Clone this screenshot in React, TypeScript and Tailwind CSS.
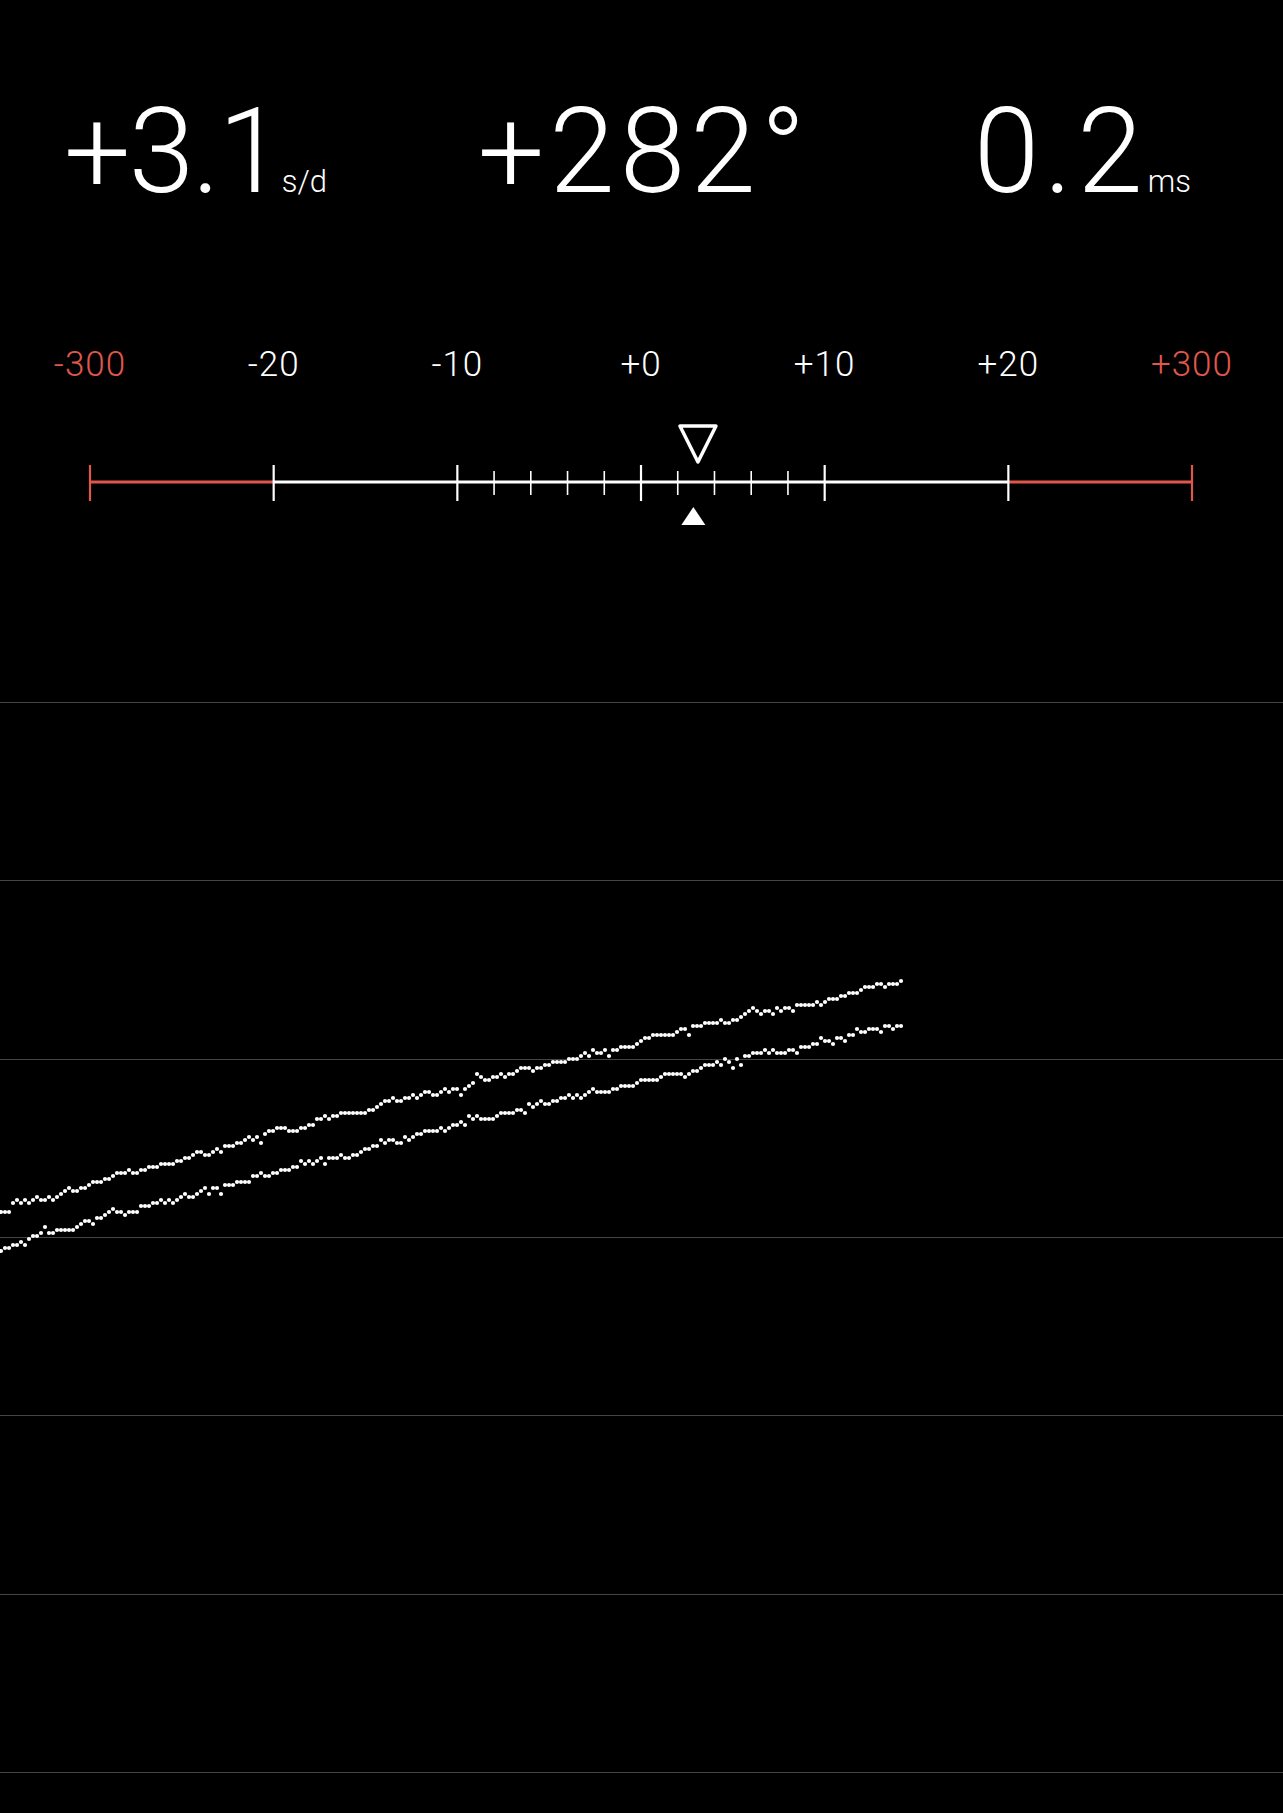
import React from "react";

const RED = "#e0574b";
const FONT = { fontFamily: "Roboto, Inter, 'Liberation Sans', sans-serif" };

// scale from -300 to +300, ticks spaced one segment apart
const X0 = 90;
const SEG = 183.67;
const labels = ["-300", "-20", "-10", "+0", "+10", "+20", "+300"];

// small seeded rng so the trace looks the same each render
function makeRng(seed: number) {
  let s = seed;
  return () => {
    s = (s * 1103515245 + 12345) % 2147483648;
    return s / 2147483648;
  };
}

function buildTrace(a: number, b: number, c: number, seed: number) {
  const rnd = makeRng(seed);
  const pts: { x: number; y: number }[] = [];
  let drift = 0;
  for (let i = 0; i < 226; i++) {
    const x = 1 + i * 4;
    drift = drift * 0.75 + (rnd() - 0.5) * 4.5;
    const jump = rnd() > 0.8 ? (rnd() - 0.5) * 10 : 0;
    const raw = a + b * x + c * x * x + drift + jump;
    pts.push({ x, y: Math.round(raw / 3) * 3 });
  }
  return pts;
}

// y values are relative to the chart top (first grid line)
const upper = buildTrace(1212 - 703, -0.2903, 4.16e-5, 7);
const lower = buildTrace(1250 - 703, -0.2927, 5.04e-5, 31);

function Reading({ value, unit, track }: { value: string; unit?: string; track: string }) {
  return (
    <div className="flex items-baseline">
      <span className={`text-[118px] leading-none font-light ${track}`}>{value}</span>
      {unit && <span className="text-[31px] leading-none font-light">{unit}</span>}
    </div>
  );
}

function Scale() {
  const majors = labels.map((_, i) => X0 + i * SEG);
  const minors = [-8, -6, -4, -2, 2, 4, 6, 8].map((v) => X0 + 3 * SEG + (v * SEG) / 10);
  const needle = X0 + 3 * SEG + (3.1 * SEG) / 10;
  const marker = X0 + 3 * SEG + (2.85 * SEG) / 10;
  const lineY = 481;
  return (
    <svg width="1283" height="120" viewBox="0 420 1283 120" className="block">
      <line x1={majors[0]} y1={lineY} x2={majors[1]} y2={lineY} stroke={RED} strokeWidth="3" />
      <line x1={majors[5]} y1={lineY} x2={majors[6]} y2={lineY} stroke={RED} strokeWidth="3" />
      <line x1={majors[1]} y1={lineY} x2={majors[5]} y2={lineY} stroke="#fff" strokeWidth="3" />
      {majors.map((x, i) => (
        <line
          key={i}
          x1={x}
          y1={464}
          x2={x}
          y2={500}
          stroke={i === 0 || i === 6 ? RED : "#fff"}
          strokeWidth="2.2"
        />
      ))}
      {minors.map((x, i) => (
        <line key={i} x1={x} y1={470} x2={x} y2={494} stroke="#fff" strokeWidth="1.6" />
      ))}
      <polygon
        points={`${needle - 18},${425} ${needle + 18},${425} ${needle},${461}`}
        fill="none"
        stroke="#fff"
        strokeWidth="3.5"
        strokeLinejoin="round"
      />
      <polygon points={`${marker - 12},${524} ${marker + 12},${524} ${marker},${506}`} fill="#fff" />
    </svg>
  );
}

function Trace() {
  return (
    <svg className="absolute left-0 top-0" width="1283" height="1071">
      {[...upper, ...lower].map((p, i) => (
        <circle key={i} cx={p.x} cy={p.y} r="2.1" fill="#fff" />
      ))}
    </svg>
  );
}

export default function App() {
  return (
    <div className="w-[1283px] h-[1813px] bg-black text-white overflow-hidden" style={FONT}>
      <div className="grid grid-cols-3 items-baseline pl-[64px] pr-[92px] pt-[93px]">
        <div className="justify-self-start">
          <Reading value="+3.1" unit="s/d" track="tracking-[-2px]" />
        </div>
        <div className="justify-self-center pl-[33px]">
          <Reading value="+282°" track="tracking-[5px]" />
        </div>
        <div className="justify-self-end">
          <Reading value="0.2" unit="ms" track="tracking-[5px]" />
        </div>
      </div>

      <div className="flex justify-between pl-[30px] pr-[31px] mt-[136px]">
        {labels.map((l, i) => (
          <div
            key={l}
            className={`w-[120px] text-center text-[35px] leading-none font-light tracking-[1px] ${
              i === 0 || i === 6 ? "text-[#e0574b]" : "text-white"
            }`}
          >
            {l}
          </div>
        ))}
      </div>

      <div className="mt-[39px]">
        <Scale />
      </div>

      <div className="relative mt-[161px] flex flex-col gap-[177.33px]">
        {Array.from({ length: 7 }).map((_, i) => (
          <div key={i} className="h-px bg-[#454545]" />
        ))}
        <Trace />
      </div>
    </div>
  );
}
